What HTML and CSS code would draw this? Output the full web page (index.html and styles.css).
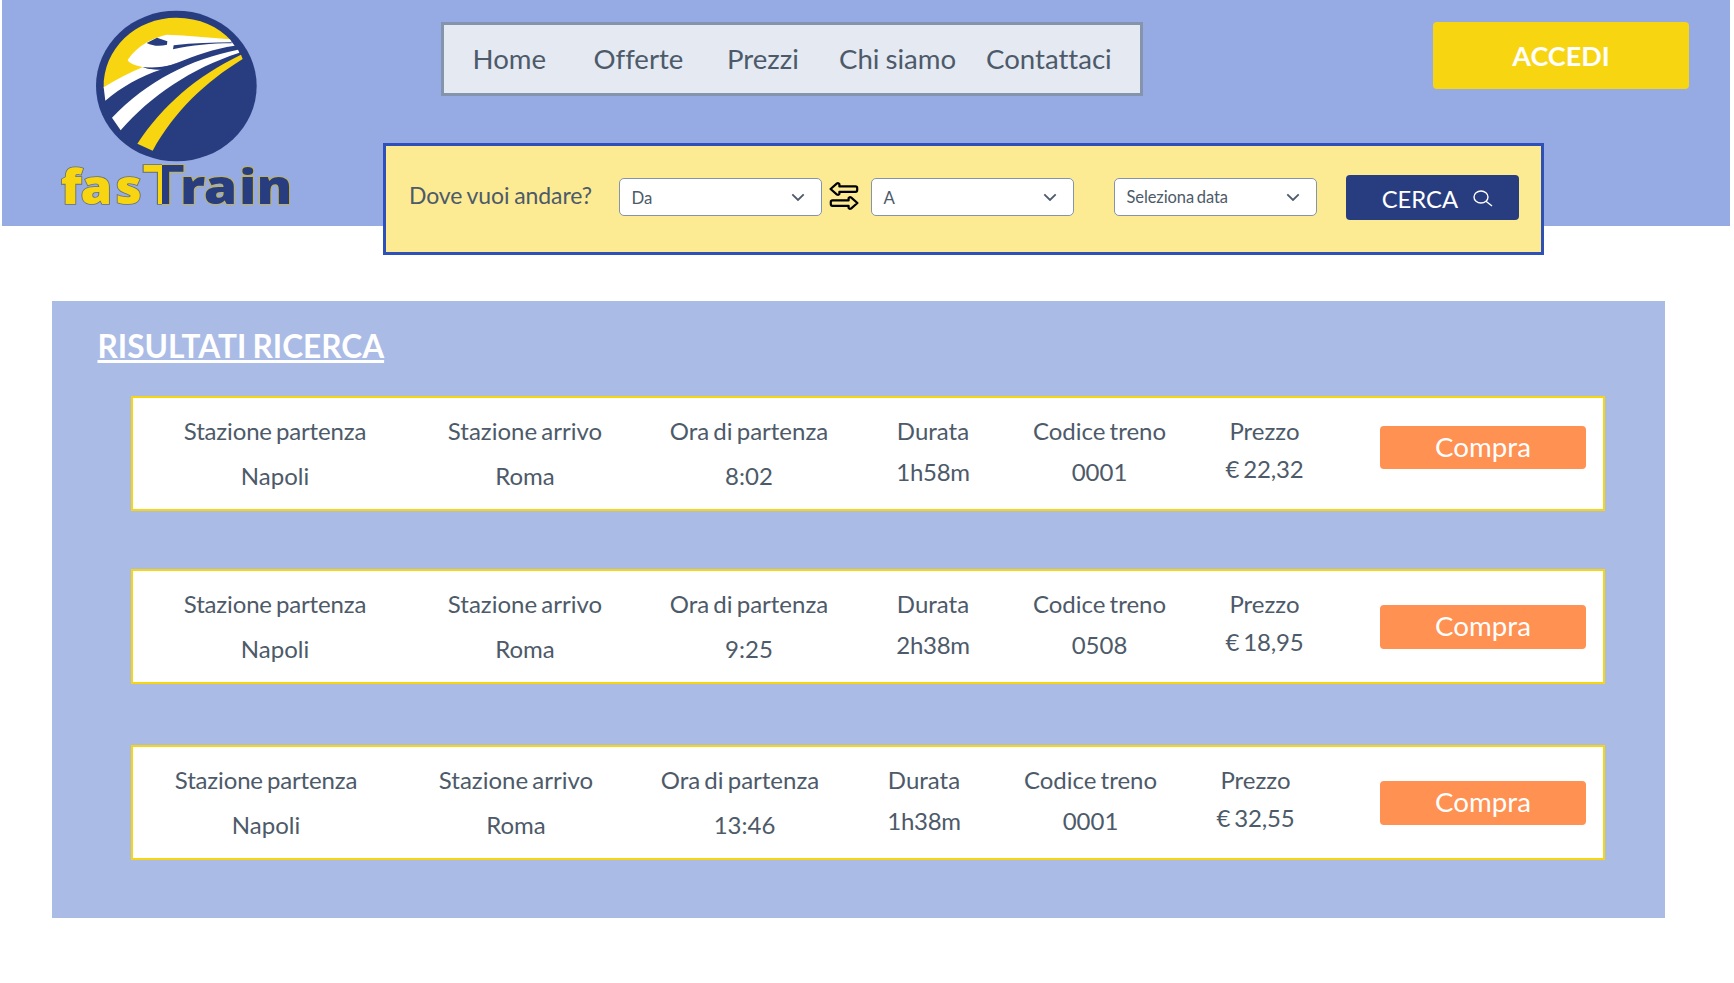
FILE: index.html
```html
<!DOCTYPE html>
<html lang="it">
<head>
<meta charset="utf-8">
<title>fasTrain</title>
<link rel="stylesheet" href="styles.css">
</head>
<body>
<header class="header">
  <svg class="logo" viewBox="0 0 1014 678" role="img" aria-label="fasTrain">
    <defs>
      <linearGradient id="split"><stop offset=".47" stop-color="#f8d511"/><stop offset=".47" stop-color="#283d80"/></linearGradient>
      <linearGradient id="edge"><stop offset=".47" stop-color="#66706f"/><stop offset=".47" stop-color="#c9b537"/></linearGradient>
    </defs>
    <g transform="translate(-6 0)">
      <ellipse cx="529" cy="258" rx="241" ry="226" fill="#283d80"/>
      <path fill="#f8d511" d="M311 264C309 145 408 53 529 53C598 53 656 80 694 122L520 150L428 205Z"/>
      <path fill="#fff" d="M311 262C350 237 389 219 427 202L450 207L486 208C420 229 364 262 316 302Z"/>
      <path fill="#fff" d="M383 180C403 151 435 120 500 104C565 107 628 112 689 118L704 137C640 146 588 166 530 189C497 202 466 204 430 202C404 196 388 190 383 180Z"/>
      <path fill="#283d80" d="M440 129L471 113L502 124L501 134C479 140 458 138 440 129ZM521 136C580 129 640 127 695 127L695 130C635 130 576 135 519 148ZM428 202C466 207 500 203 536 187L486 209C463 210 447 207 428 202Z"/>
      <path fill="#fff" d="M336 353C443 242 570 178 714 149L718 158C574 205 452 287 362 391Z"/>
      <path fill="#f8d511" d="M412 431C488 316 588 229 723 164L728 177C616 246 524 333 458 452Z"/>
      <g class="wordmark">
        <text transform="scale(1.06 1)" x="172 228 327" y="612" font-size="144" fill="#f8d511" stroke="#66706f">fas</text>
        <text class="capital" x="427" y="612" font-size="160" textLength="128" lengthAdjust="spacingAndGlyphs" fill="url(#split)" stroke="url(#edge)">T</text>
        <text transform="scale(1.12 1)" x="482 546 640 687" y="612" font-size="144" fill="#283d80" stroke="#c9b537">rain</text>
      </g>
    </g>
  </svg>
  <nav class="nav"><a>Home</a><a>Offerte</a><a>Prezzi</a><a>Chi siamo</a><a>Contattaci</a></nav>
  <button class="login">ACCEDI</button>
</header>

<section class="search">
  <span class="question">Dove vuoi andare?</span>
  <div class="select from">Da<svg class="chevron" viewBox="0 0 14 9"><path d="M1.3 1.3L7 7L12.7 1.3"/></svg></div>
  <svg class="swap" viewBox="0 0 30 30"><path d="M1.6 7L8 1.4Q9.5 .8 10.4 2.2V4.4H26.5Q28.2 4.4 28.2 6V8Q28.2 9.8 26.5 9.8H10.4V12Q9.5 13.4 8 12.6ZM28.4 21L22 15.4Q20.5 14.8 19.6 16.2V18.4H3.5Q1.8 18.4 1.8 20V22Q1.8 23.8 3.5 23.8H19.6V26Q20.5 27.4 22 26.6Z"/></svg>
  <div class="select to">A<svg class="chevron" viewBox="0 0 14 9"><path d="M1.3 1.3L7 7L12.7 1.3"/></svg></div>
  <div class="select date">Seleziona data<svg class="chevron" viewBox="0 0 14 9"><path d="M1.3 1.3L7 7L12.7 1.3"/></svg></div>
  <button class="go">CERCA<svg class="lens" viewBox="0 0 20 17"><ellipse cx="8" cy="7" rx="7" ry="6"/><path d="M13 11.2L19 16"/></svg></button>
</section>

<main class="results">
  <h1 class="title">RISULTATI RICERCA</h1>
  <article class="card first">
    <div class="cell station"><span>Stazione partenza</span><b>Napoli</b></div>
    <div class="cell arrival"><span>Stazione arrivo</span><b>Roma</b></div>
    <div class="cell time"><span>Ora di partenza</span><b>8:02</b></div>
    <div class="cell duration"><span>Durata</span><b>1h58m</b></div>
    <div class="cell code"><span>Codice treno</span><b>0001</b></div>
    <div class="cell price"><span>Prezzo</span><b>€ 22,32</b></div>
    <button class="buy">Compra</button>
  </article>
  <article class="card second">
    <div class="cell station"><span>Stazione partenza</span><b>Napoli</b></div>
    <div class="cell arrival"><span>Stazione arrivo</span><b>Roma</b></div>
    <div class="cell time"><span>Ora di partenza</span><b>9:25</b></div>
    <div class="cell duration"><span>Durata</span><b>2h38m</b></div>
    <div class="cell code"><span>Codice treno</span><b>0508</b></div>
    <div class="cell price"><span>Prezzo</span><b>€ 18,95</b></div>
    <button class="buy">Compra</button>
  </article>
  <article class="card third">
    <div class="cell station"><span>Stazione partenza</span><b>Napoli</b></div>
    <div class="cell arrival"><span>Stazione arrivo</span><b>Roma</b></div>
    <div class="cell time"><span>Ora di partenza</span><b>13:46</b></div>
    <div class="cell duration"><span>Durata</span><b>1h38m</b></div>
    <div class="cell code"><span>Codice treno</span><b>0001</b></div>
    <div class="cell price"><span>Prezzo</span><b>€ 32,55</b></div>
    <button class="buy">Compra</button>
  </article>
</main>
</body>
</html>
```
FILE: styles.css
```css
* { box-sizing: border-box; }
body { margin: 0; height: 983px; overflow: hidden; background: #fff; color: #4d5a69; font-family: Lato, sans-serif; font-variant-ligatures: none; }
button { border: 0; padding: 0; font-family: inherit; color: #fff; }

.header { display: flex; align-items: flex-start; height: 226px; margin: 0 4px 0 2px; background: #96abe3; }
.logo { display: block; width: 338px; height: 226px; flex: none; }
.wordmark { font-family: "Open Sans", sans-serif; font-weight: 800; stroke-width: 5px; paint-order: stroke; }
.capital { font-weight: 700; }
.nav { display: grid; grid-template-columns: 121px 133.5px 112px 147px auto; align-items: center; flex: none; width: 702px; height: 74px; margin: 22px 0 0 101px; padding: 0 0 1px 28.5px; border: 3px solid #8494ad; background: #e4e9f2; font-size: 27.6px; word-spacing: -1px; white-space: nowrap; }
.login { width: 256px; height: 67px; margin: 22px 0 0 290px; padding-bottom: 1px; border-radius: 4px; background: #f8d511; font-size: 27px; font-weight: 700; }

.search { display: flex; align-items: flex-start; width: 1161px; height: 112px; margin: -83px 0 0 383px; padding-left: 23px; border: 3px solid #2d50b9; background: #fceb93; }
.question { width: 210px; margin-top: 33px; font-size: 23px; line-height: 32px; letter-spacing: -.1px; word-spacing: -1px; white-space: nowrap; }
.select { display: flex; align-items: center; justify-content: space-between; flex: none; width: 203px; height: 38px; margin-top: 32px; padding: 0 16px 0 11.5px; border: 1px solid #8494ad; border-radius: 5px; background: #fff; font-size: 16.8px; }
.chevron { width: 14px; height: 9px; fill: none; stroke: #4d5a69; stroke-width: 1.8; }
.swap { flex: none; width: 30px; height: 30px; margin: 35.5px 12px 0 7px; fill: none; stroke: #000; stroke-width: 2.2; stroke-linejoin: round; }
.date { margin-left: 40px; font-size: 16.5px; letter-spacing: -.1px; word-spacing: -1.3px; }
.go { display: flex; align-items: center; flex: none; width: 173px; height: 45px; margin: 29px 0 0 28.7px; padding: 2px 0 0 36px; border-radius: 4px; background: #283d80; font-size: 23.8px; }
.lens { width: 20px; height: 17px; margin-left: 15px; fill: none; stroke: #fff; stroke-width: 1.4; }

.results { width: 1613px; height: 617.5px; margin: 45.5px 0 0 52px; padding: 25.5px 60px 0 79px; background: #aabce6; }
.title { margin: 0 0 30px -33.5px; color: #fff; font-size: 31.6px; line-height: 40px; word-spacing: -1.5px; text-decoration: underline; text-decoration-thickness: 2.7px; text-underline-offset: 2px; }
.card { display: flex; width: 1474px; height: 115px; margin-bottom: 58px; border: 2px solid #f8d511; background: #fff; }
.second { margin-bottom: 61px; }
.cell { flex: none; padding-top: 18px; text-align: center; font-size: 24px; line-height: 30px; word-spacing: -2px; white-space: nowrap; }
.cell span, .cell b { display: block; font-weight: 400; }
.cell b { margin-top: 15px; }
.station { width: 284px; }
.station span { letter-spacing: -.15px; }
.arrival { width: 216px; }
.time { width: 232px; }
.duration { width: 136px; }
.code { width: 197px; }
.price { width: 133px; }
.price b { letter-spacing: -.15px; }
.duration b, .code b { margin-top: 11px; }
.duration b { letter-spacing: -.3px; }
.price b { margin-top: 8px; }
.third .station { margin-left: -9px; }
.third .time b { padding-left: 9px; }
.third .price { margin-right: 9px; }
.buy { width: 206px; height: 43.5px; margin: 27.5px 0 0 49px; border-radius: 4px; background: #ff9152; font-size: 27.7px; padding-bottom: 2px; }
.second .buy, .third .buy { margin-top: 34px; }
.second .buy { padding-bottom: 3px; }
```
